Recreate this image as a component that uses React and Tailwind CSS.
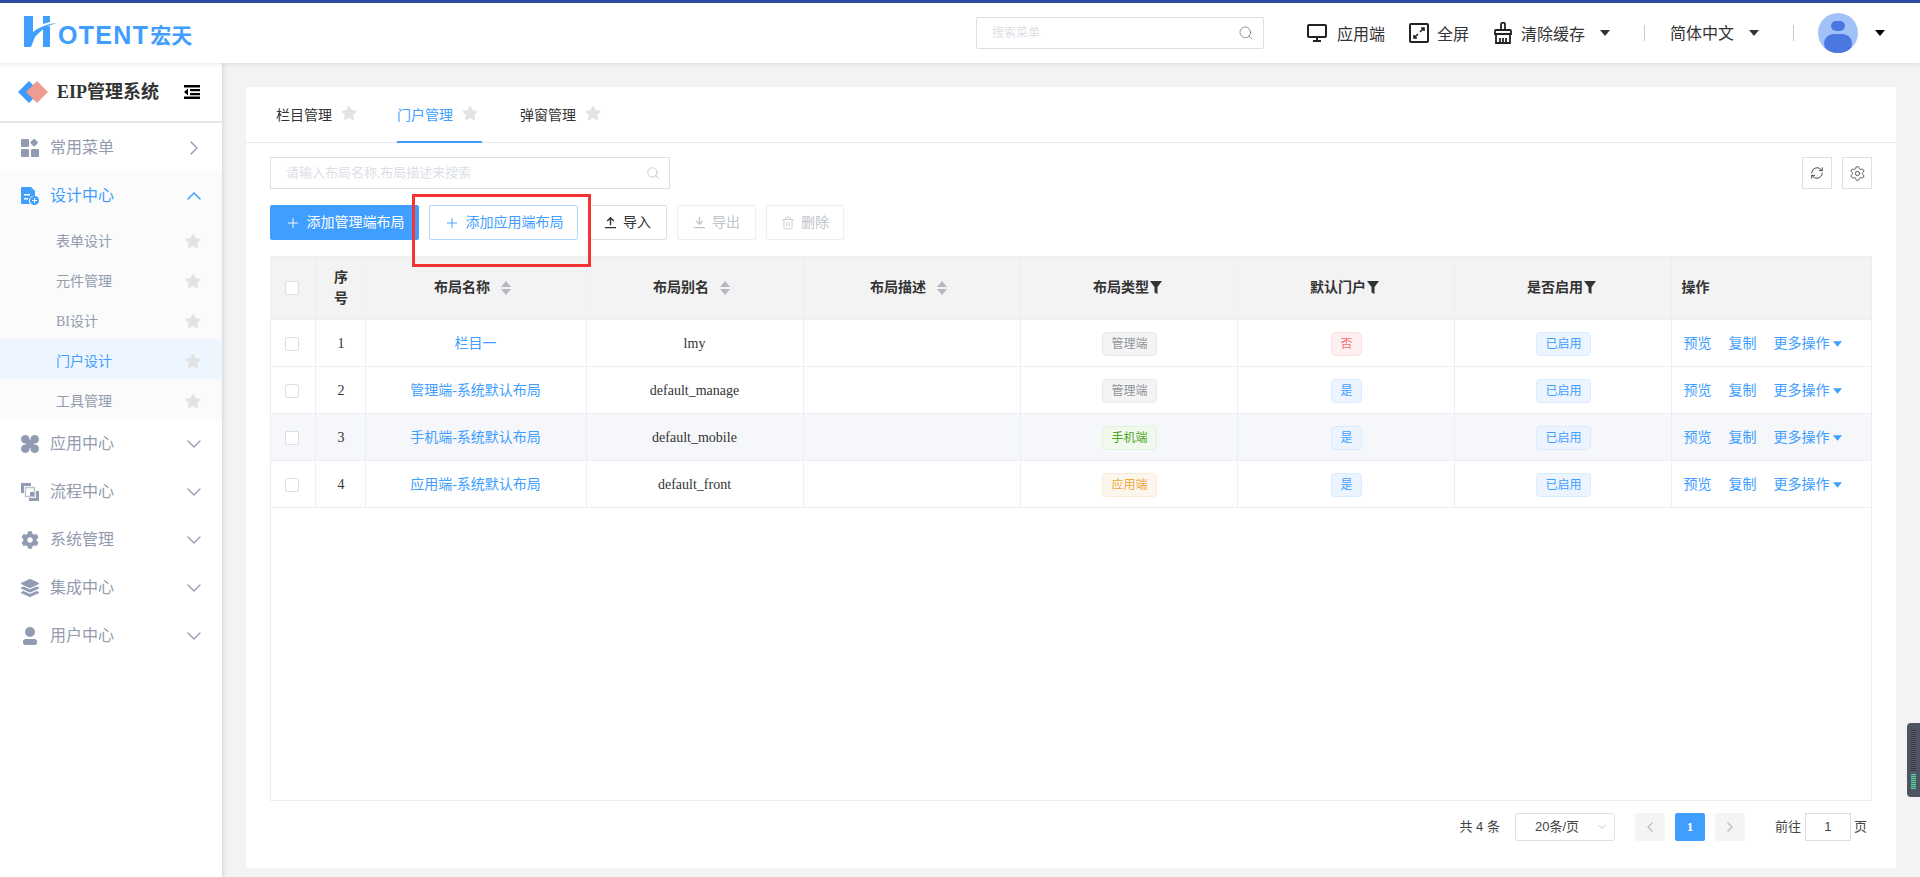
import React from "react";
import { ChevronRight, ChevronDown, ChevronUp, ChevronLeft, Search, RefreshCw, Settings, Plus, Trash2 } from "lucide-react";
import { FaCog, FaLayerGroup, FaStar } from "react-icons/fa";

const sans = "[font-family:Liberation_Sans,Noto_Sans_CJK_SC,sans-serif]";

function Caret({ className = "" }) {
  return (
    <svg viewBox="0 0 10 6" className={`w-[10px] h-[6px] ${className}`} fill="currentColor">
      <path d="M0 0h10L5 6z" />
    </svg>
  );
}

function Star({ className = "" }) {
  return <FaStar className={`text-[#e3e3e3] ${className}`} />;
}

function SortCaret() {
  return (
    <svg viewBox="0 0 10 14" className="w-[10px] h-[14px] ml-[11px] text-[#b4b8c0]" fill="currentColor">
      <path d="M5 0l5 6H0zM5 14L0 8h10z" />
    </svg>
  );
}

function Funnel() {
  return (
    <svg viewBox="0 0 12 13" className="w-[12px] h-[13px] ml-[1px] text-[#333]" fill="currentColor">
      <path d="M0 0h12L7.500 6v7l-3-1.500V6z" />
    </svg>
  );
}

function UpIcon({ className = "" }) {
  return (
    <svg viewBox="0 0 14 14" className={`w-[14px] h-[14px] ${className}`} fill="none" stroke="currentColor" strokeWidth="1.500">
      <path d="M1 12.500h12M7 10V2M3.500 5.500L7 2l3.500 3.500" />
    </svg>
  );
}

function DownIcon({ className = "" }) {
  return (
    <svg viewBox="0 0 14 14" className={`w-[14px] h-[14px] ${className}`} fill="none" stroke="currentColor" strokeWidth="1.500">
      <path d="M1 12.500h12M7 1v8M3.500 5.500L7 9l3.500-3.500" />
    </svg>
  );
}

const iconClass = "w-[18px] h-[18px] text-[#919bb1] shrink-0";

function MenuIcon({ name }) {
  if (name === "common") {
    return (
      <svg viewBox="0 0 18 18" className={iconClass} fill="currentColor">
        <rect x="0" y="0" width="8" height="8" rx="1" />
        <rect x="10" y="1" width="6" height="6" rx="1.500" transform="rotate(45 13.500 4)" />
        <rect x="0" y="10" width="8" height="8" rx="1" />
        <rect x="10" y="10" width="8" height="8" rx="1" />
      </svg>
    );
  }
  if (name === "design") {
    return (
      <svg viewBox="0 0 18 18" className="w-[18px] h-[18px] text-[#409eff] shrink-0" fill="currentColor">
        <path d="M1 0h9l4 4v5a5 5 0 0 0-5 8H1a1 1 0 0 1-1-1V1a1 1 0 0 1 1-1z" />
        <rect x="3" y="7" width="6" height="1.500" fill="#fff" />
        <rect x="3" y="11" width="4" height="1.500" fill="#fff" />
        <circle cx="13.500" cy="13.500" r="4.500" />
        <path d="M13 11h1v2h2v1h-2v2h-1v-2h-2v-1h2z" fill="#fff" />
      </svg>
    );
  }
  if (name === "app") {
    return (
      <svg viewBox="0 0 18 18" className={iconClass} fill="currentColor">
        <circle cx="4.300" cy="4.300" r="4.300" />
        <circle cx="13.700" cy="4.300" r="4.300" />
        <circle cx="4.300" cy="13.700" r="4.300" />
        <circle cx="13.700" cy="13.700" r="4.300" />
        <rect x="5" y="5" width="8" height="8" />
      </svg>
    );
  }
  if (name === "flow") {
    return (
      <svg viewBox="0 0 18 18" className={iconClass} fill="currentColor">
        <path d="M0 0h10v3H3v7H0z" />
        <path d="M18 18H8v-3h7V8h3z" />
        <path d="M4.500 4.500h9v9h-9z" fill="none" stroke="currentColor" strokeOpacity=".6" strokeWidth="1.500" />
        <rect x="9" y="9" width="4" height="4" />
      </svg>
    );
  }
  if (name === "system") return <FaCog className={iconClass} />;
  if (name === "integrate") return <FaLayerGroup className={iconClass} />;
  return (
    <svg viewBox="0 0 18 18" className={iconClass} fill="currentColor">
      <circle cx="9" cy="5" r="5" />
      <rect x="2" y="12" width="14" height="6" rx="2.500" />
    </svg>
  );
}

function TopMenu({ icon, label, active, open, arrow }) {
  const Chevron = arrow === "right" ? ChevronRight : open ? ChevronUp : ChevronDown;
  return (
    <div className={`flex items-center h-[48px] pl-[21px] pr-[16px] pt-[2px] ${open ? "bg-[#fbfbfb]" : ""}`}>
      <MenuIcon name={icon} />
      <span className={`ml-[11px] text-[16px] flex-1 ${active ? "text-[#409eff]" : "text-[#939bae]"}`}>
        {label}
      </span>
      <Chevron className={`w-[24px] h-[24px] ${active ? "text-[#409eff]" : "text-[#9aa3b5]"}`} strokeWidth={1.500} />
    </div>
  );
}

function SubMenu({ label, active }) {
  return (
    <div className={`flex items-center h-[40px] pl-[56px] pr-[21px] pt-[4px] ${active ? "bg-[#edf6ff]" : "bg-[#fbfbfb]"}`}>
      <span className={`flex-1 text-[14px] ${active ? "text-[#409eff]" : "text-[#939bae]"}`}>{label}</span>
      <Star className="w-[16px] h-[16px]" />
    </div>
  );
}

function Sidebar() {
  return (
    <aside className="w-[222px] shrink-0 bg-white shadow-[2px_0_4px_rgba(0,0,0,0.1)] z-10">
      <div className="flex items-center h-[60px] border-b-2 border-[#e4e6ea] pl-[18px] pr-[22px]">
        <svg viewBox="0 0 30 22" className="w-[30px] h-[22px] shrink-0">
          <path d="M11 0l11 11-11 11L0 11z" fill="#3d9bfb" />
          <path d="M19 0l11 11-11 11L8 11z" fill="#ee9c8f" />
        </svg>
        <span className="ml-[9px] flex-1 text-[18px] font-bold text-[#333] whitespace-nowrap">EIP管理系统</span>
        <svg viewBox="0 0 16 14" className="w-[16px] h-[14px] text-black" fill="currentColor">
          <path d="M0 0h16v2.500H0zM6 4h10v2.200H6zM6 8h10v2.200H6zM0 11.500h16V14H0zM4 3.500v7L0 7z" />
        </svg>
      </div>
      <TopMenu icon="common" label="常用菜单" arrow="right" />
      <TopMenu icon="design" label="设计中心" active open />
      <SubMenu label="表单设计" />
      <SubMenu label="元件管理" />
      <SubMenu label="BI设计" />
      <SubMenu label="门户设计" active />
      <SubMenu label="工具管理" />
      <TopMenu icon="app" label="应用中心" />
      <TopMenu icon="flow" label="流程中心" />
      <TopMenu icon="system" label="系统管理" />
      <TopMenu icon="integrate" label="集成中心" />
      <TopMenu icon="user" label="用户中心" />
    </aside>
  );
}

function Header() {
  return (
    <header className="h-[63px] shrink-0 bg-white border-t-[3px] border-[#2b4f9e] shadow-[0_1px_4px_rgba(0,0,0,0.1)] flex items-center z-20 relative">
      <div className="flex items-end ml-[24px] -mt-[4px]">
        <svg viewBox="0 0 33 31" className="w-[33px] h-[31px]" fill="#409eff">
          <path d="M0 0h9v16C14 12 22 8 33 7c-9 2-16 7-22 14l-4 10H0z" />
          <path d="M19 12l7-2v21h-7z" />
          <path d="M19 0h7v6l-7 2z" />
        </svg>
        <span className={`ml-[1px] text-[25px] leading-[24px] font-bold text-[#409eff] tracking-[1.300px] ${sans}`}>OTENT</span>
        <span className={`ml-[1px] text-[21px] leading-[22px] font-bold text-[#409eff] ${sans}`}>宏天</span>
      </div>
      <div className="ml-auto flex items-center">
        <div className="w-[288px] h-[32px] border border-[#dcdfe6] rounded-[2px] flex items-center pl-[15px] pr-[9px]">
          <span className="flex-1 text-[12px] text-[#dcdfe6]">搜索菜单</span>
          <Search className="w-[16px] h-[16px] text-[#8d9199]" strokeWidth={1.500} />
        </div>
        <svg viewBox="0 0 20 18" className="ml-[43px] w-[20px] h-[18px] text-[#222]" fill="none" stroke="currentColor" strokeWidth="2">
          <rect x="1" y="1" width="18" height="12" rx="1" />
          <path d="M10 13v4M6 17h8" />
        </svg>
        <span className="ml-[10px] text-[16px] text-[#333] pt-[4px]">应用端</span>
        <svg viewBox="0 0 20 20" className="ml-[24px] w-[20px] h-[20px] text-[#222]" fill="none" stroke="currentColor" strokeWidth="2">
          <rect x="1" y="1" width="18" height="18" rx="1" />
          <path d="M11 9l4-4M12 5h3v3M9 11l-4 4M5 12v3h3" strokeWidth="1.600" />
        </svg>
        <span className="ml-[8px] text-[16px] text-[#333] pt-[4px]">全屏</span>
        <svg viewBox="0 0 20 22" className="ml-[24px] w-[20px] h-[22px] text-[#222]" fill="none" stroke="currentColor" strokeWidth="1.800">
          <path d="M8 8V2.500a2 2 0 0 1 4 0V8M2 9a1 1 0 0 1 1-1h14a1 1 0 0 1 1 1v3H2zM3 12v9h14v-9M7 21v-5M10 21v-5M13 21v-5" />
        </svg>
        <span className="ml-[8px] text-[16px] text-[#333] pt-[4px]">清除缓存</span>
        <Caret className="ml-[15px] text-[#333]" />
        <div className="ml-[34px] w-px h-[16px] bg-[#c8c9cc]" />
        <span className="ml-[25px] text-[16px] text-[#333] pt-[2px]">简体中文</span>
        <Caret className="ml-[15px] text-[#333]" />
        <div className="ml-[34px] w-px h-[16px] bg-[#c8c9cc]" />
        <div className="ml-[24px] w-[40px] h-[40px] rounded-full bg-[#a3c1f9] overflow-hidden flex flex-col items-center">
          <div className="mt-[8px] w-[14px] h-[14px] rounded-full bg-[#4a78e0]" />
          <div className="mt-[3px] w-[28px] h-[28px] rounded-full bg-[#4a78e0]" />
        </div>
        <Caret className="ml-[17px] mr-[35px] text-black" />
      </div>
    </header>
  );
}

function Tab({ label, active, className = "" }) {
  return (
    <div className={`h-[56px] w-[85px] flex items-center gap-[9px] -mb-px border-b-2 whitespace-nowrap ${active ? "border-[#409eff] text-[#409eff]" : "border-transparent text-[#333]"} ${className}`}>
      <span className="text-[14px] pt-[2px]">{label}</span>
      <Star className="w-[16px] h-[16px] -mt-[2px]" />
    </div>
  );
}

function Btn({ icon: Icon, label, className = "", iconClassName = "w-[14px] h-[14px]" }) {
  return (
    <button className={`h-[35px] flex items-center justify-center gap-[6px] rounded-[2px] border text-[14px] ${className}`}>
      <Icon className={iconClassName} strokeWidth={1.400} />
      {label}
    </button>
  );
}

const tagStyles = {
  gray: "bg-[#f4f4f5] border-[#e9e9eb] text-[#909399]",
  red: "bg-[#fef0f0] border-[#fde2e2] text-[#f56c6c]",
  blue: "bg-[#ecf5ff] border-[#d9ecff] text-[#409eff]",
  green: "bg-[#f0f9eb] border-[#e1f3d8] text-[#4fa52c]",
  orange: "bg-[#fdf6ec] border-[#faecd8] text-[#f0a63c]",
};

function Tag({ color, children }) {
  return (
    <span className={`inline-flex items-center h-[24px] ml-[2px] px-[8px] border rounded-[4px] text-[12px] ${tagStyles[color]}`}>
      {children}
    </span>
  );
}

function CheckBox() {
  return (
    <div className="flex justify-center pr-[2px]">
      <span className="block w-[14px] h-[14px] border border-[#dcdfe6] rounded-[2px] bg-white" />
    </div>
  );
}

const rows = [
  { no: 1, name: "栏目一", alias: "lmy", type: ["gray", "管理端"], def: ["red", "否"] },
  { no: 2, name: "管理端-系统默认布局", alias: "default_manage", type: ["gray", "管理端"], def: ["blue", "是"] },
  { no: 3, name: "手机端-系统默认布局", alias: "default_mobile", type: ["green", "手机端"], def: ["blue", "是"], hover: true },
  { no: 4, name: "应用端-系统默认布局", alias: "default_front", type: ["orange", "应用端"], def: ["blue", "是"] },
];

const th = "border-r border-b border-[#ebeef5] font-bold text-[14px] text-[#333] text-center";
const td = "border-r border-b border-[#ebeef5] text-[14px] text-[#333] text-center pt-[2px]";
const sortHead = "inline-flex items-center pr-[6px]";
const filterHead = "inline-flex items-center pr-[2px]";

function LayoutTable() {
  return (
    <div className="flex-1 border border-[#ebeef5] overflow-hidden">
      <table className="w-[1600px] table-fixed border-collapse">
        <colgroup>
          <col className="w-[44px]" />
          <col className="w-[50px]" />
          <col className="w-[221px]" />
          <col className="w-[217px]" />
          <col className="w-[217px]" />
          <col className="w-[217px]" />
          <col className="w-[217px]" />
          <col className="w-[217px]" />
          <col className="w-[200px]" />
        </colgroup>
        <thead>
          <tr className="h-[62px] bg-[#f3f3f3]">
            <th className={th}><CheckBox /></th>
            <th className={`${th} pl-[2px]`}>序<br />号</th>
            <th className={th}><span className={sortHead}>布局名称<SortCaret /></span></th>
            <th className={th}><span className={sortHead}>布局别名<SortCaret /></span></th>
            <th className={th}><span className={sortHead}>布局描述<SortCaret /></span></th>
            <th className={th}><span className={filterHead}>布局类型<Funnel /></span></th>
            <th className={th}><span className={filterHead}>默认门户<Funnel /></span></th>
            <th className={th}><span className={filterHead}>是否启用<Funnel /></span></th>
            <th className={`${th} text-left pl-[10px] border-r-0`}>操作</th>
          </tr>
        </thead>
        <tbody>
          {rows.map((r) => (
            <tr key={r.no} className={`h-[47px] ${r.hover ? "bg-[#f5f7fa]" : ""}`}>
              <td className={td}><CheckBox /></td>
              <td className={`${td} pl-[2px]`}>{r.no}</td>
              <td className={`${td} !text-[#409eff]`}>{r.name}</td>
              <td className={td}>{r.alias}</td>
              <td className={td}></td>
              <td className={td}><Tag color={r.type[0]}>{r.type[1]}</Tag></td>
              <td className={td}><Tag color={r.def[0]}>{r.def[1]}</Tag></td>
              <td className={td}><Tag color="blue">已启用</Tag></td>
              <td className={`${td} border-r-0 text-left pl-[12px]`}>
                <span className="flex items-center text-[#409eff]">
                  <span>预览</span>
                  <span className="ml-[17px]">复制</span>
                  <span className="ml-[17px]">更多操作</span>
                  <Caret className="ml-[3px] !w-[9px]" />
                </span>
              </td>
            </tr>
          ))}
        </tbody>
      </table>
    </div>
  );
}

function Pagination() {
  return (
    <div className={`h-[67px] shrink-0 flex items-start justify-end pr-[5px] pt-[12px] leading-[28px] text-[13px] text-[#444] ${sans}`}>
      <span>共 4 条</span>
      <div className="ml-[15px] w-[100px] h-[28px] border border-[#dcdfe6] rounded-[3px] flex items-center pl-[19px] pr-[6px]">
        <span className="flex-1">20条/页</span>
        <ChevronDown className="w-[12px] h-[12px] text-[#c0c4cc]" />
      </div>
      <div className="ml-[20px] w-[30px] h-[28px] bg-[#f4f4f5] rounded-[2px] flex items-center justify-center">
        <ChevronLeft className="w-[16px] h-[16px] text-[#c0c4cc]" strokeWidth={2.500} />
      </div>
      <div className="ml-[10px] w-[30px] h-[28px] bg-[#409eff] rounded-[2px] flex items-center justify-center text-white font-bold [font-family:Liberation_Serif,serif]">1</div>
      <div className="ml-[10px] w-[30px] h-[28px] bg-[#f4f4f5] rounded-[2px] flex items-center justify-center">
        <ChevronRight className="w-[16px] h-[16px] text-[#c0c4cc]" strokeWidth={2.500} />
      </div>
      <span className="ml-[30px]">前往</span>
      <div className="ml-[4px] w-[46px] h-[28px] border border-[#dcdfe6] flex items-center justify-center">1</div>
      <span className="ml-[3px]">页</span>
    </div>
  );
}

function Main() {
  return (
    <main className="flex-1 min-w-0 pt-[24px] pr-[24px] pb-[9px] pl-[24px] flex">
      <div className="flex-1 min-w-0 bg-white flex flex-col">
        <div className="h-[56px] shrink-0 border-b border-[#e6e8ef] flex gap-[36px] pl-[30px]">
          <Tab label="栏目管理" />
          <Tab label="门户管理" active />
          <Tab label="弹窗管理" className="ml-[2px]" />
        </div>
        <div className="flex-1 min-h-0 pt-[14px] px-[24px] flex flex-col">
          <div className="flex justify-between">
            <div className="w-[400px] h-[32px] border border-[#dcdfe6] flex items-center pl-[15px] pr-[9px]">
              <span className="flex-1 text-[13px] text-[#dcdfe6]">请输入布局名称,布局描述来搜索</span>
              <Search className="w-[14px] h-[14px] text-[#c0c4cc]" strokeWidth={1.500} />
            </div>
            <div className="flex gap-[10px]">
              <div className="w-[30px] h-[32px] border border-[#dcdfe6] flex items-center justify-center">
                <RefreshCw className="w-[14px] h-[14px] text-[#333]" strokeWidth={1.500} />
              </div>
              <div className="w-[30px] h-[32px] border border-[#dcdfe6] flex items-center justify-center">
                <Settings className="w-[17px] h-[17px] text-[#555]" strokeWidth={1.400} />
              </div>
            </div>
          </div>
          <div className="mt-[16px] flex gap-[10px] relative">
            <Btn icon={Plus} iconClassName="w-[16px] h-[16px]" label="添加管理端布局" className="w-[149px] bg-[#409eff] border-[#409eff] text-white" />
            <Btn icon={Plus} iconClassName="w-[16px] h-[16px]" label="添加应用端布局" className="w-[149px] bg-white border-[#b3d8ff] text-[#409eff]" />
            <Btn icon={UpIcon} iconClassName="!w-[13px] !h-[13px]" label="导入" className="w-[79px] bg-white border-[#dcdfe6] text-[#333]" />
            <Btn icon={DownIcon} iconClassName="!w-[13px] !h-[13px]" label="导出" className="w-[79px] bg-white border-[#ebeef5] text-[#c0c4cc]" />
            <Btn icon={Trash2} label="删除" className="w-[78px] bg-white border-[#ebeef5] text-[#c0c4cc]" />
            <div className="absolute left-[142px] -top-[11px] w-[179px] h-[73px] border-[3px] border-[#f33434] pointer-events-none" />
          </div>
          <div className="mt-[16px] flex-1 min-h-0 flex">
            <LayoutTable />
          </div>
          <Pagination />
        </div>
      </div>
    </main>
  );
}

export default function App() {
  return (
    <div className="relative h-screen overflow-hidden flex flex-col bg-[#f3f3f3] [font-family:Liberation_Serif,Noto_Sans_CJK_SC,serif]">
      <Header />
      <div className="flex-1 min-h-0 flex">
        <Sidebar />
        <Main />
      </div>
      <div className="absolute right-0 top-[723px] w-[13px] h-[74px] bg-[#4e5461] rounded-l-[4px] flex flex-col items-center justify-end pb-[8px] gap-px">
        <div className="w-[5px] h-[42px] mb-px bg-[repeating-linear-gradient(to_bottom,#2f333b_0,#2f333b_1px,#5d6270_1px,#5d6270_2px)]" />
        <div className="w-[5px] h-[15px] bg-[repeating-linear-gradient(to_bottom,#5fcf9f_0,#5fcf9f_1px,#3f7f70_1px,#3f7f70_2px)]" />
      </div>
    </div>
  );
}
